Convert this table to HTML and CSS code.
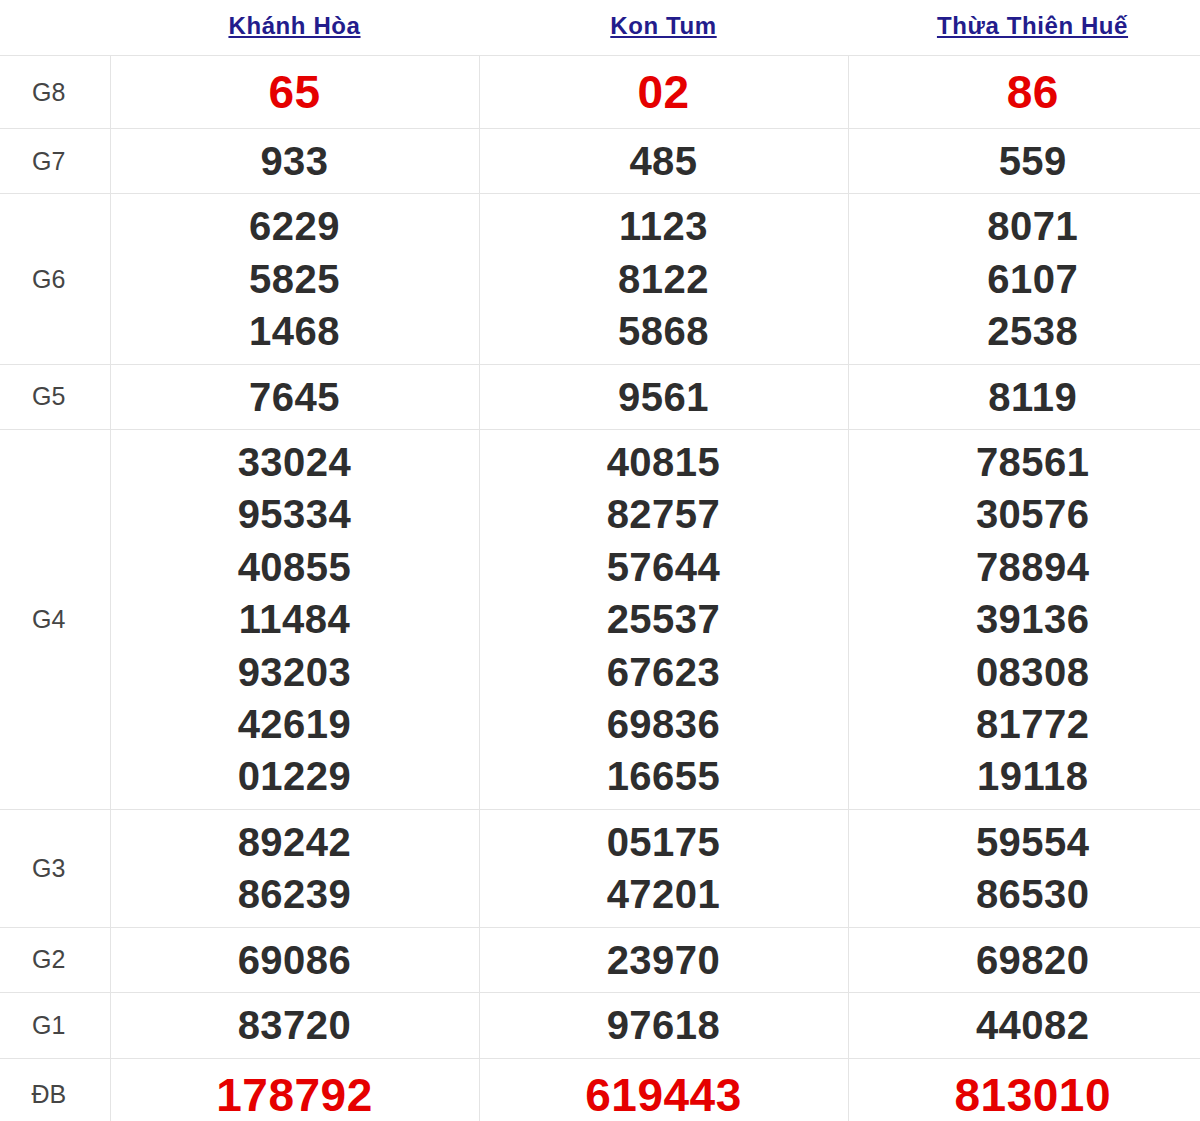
FILE: index.html
```html
<!DOCTYPE html>
<html lang="vi">
<head>
<meta charset="utf-8">
<title>Kết quả xổ số</title>
<link rel="stylesheet" href="styles.css">
</head>
<body>
<table class="kq">
  <colgroup>
    <col class="c-label">
    <col class="c-prov">
    <col class="c-prov">
    <col class="c-prov">
  </colgroup>
  <thead>
    <tr class="head">
      <th></th>
      <th><a href="#">Khánh Hòa</a></th>
      <th><a href="#">Kon Tum</a></th>
      <th><a href="#">Thừa Thiên Huế</a></th>
    </tr>
  </thead>
  <tbody>
    <tr class="big">
      <td class="lbl">G8</td>
      <td class="num red">65</td>
      <td class="num red">02</td>
      <td class="num red">86</td>
    </tr>
    <tr>
      <td class="lbl">G7</td>
      <td class="num">933</td>
      <td class="num">485</td>
      <td class="num">559</td>
    </tr>
    <tr>
      <td class="lbl">G6</td>
      <td class="num"><div>6229</div><div>5825</div><div>1468</div></td>
      <td class="num"><div>1123</div><div>8122</div><div>5868</div></td>
      <td class="num"><div>8071</div><div>6107</div><div>2538</div></td>
    </tr>
    <tr>
      <td class="lbl">G5</td>
      <td class="num">7645</td>
      <td class="num">9561</td>
      <td class="num">8119</td>
    </tr>
    <tr>
      <td class="lbl">G4</td>
      <td class="num"><div>33024</div><div>95334</div><div>40855</div><div>11484</div><div>93203</div><div>42619</div><div>01229</div></td>
      <td class="num"><div>40815</div><div>82757</div><div>57644</div><div>25537</div><div>67623</div><div>69836</div><div>16655</div></td>
      <td class="num"><div>78561</div><div>30576</div><div>78894</div><div>39136</div><div>08308</div><div>81772</div><div>19118</div></td>
    </tr>
    <tr>
      <td class="lbl">G3</td>
      <td class="num"><div>89242</div><div>86239</div></td>
      <td class="num"><div>05175</div><div>47201</div></td>
      <td class="num"><div>59554</div><div>86530</div></td>
    </tr>
    <tr>
      <td class="lbl">G2</td>
      <td class="num">69086</td>
      <td class="num">23970</td>
      <td class="num">69820</td>
    </tr>
    <tr>
      <td class="lbl">G1</td>
      <td class="num">83720</td>
      <td class="num">97618</td>
      <td class="num">44082</td>
    </tr>
    <tr class="big">
      <td class="lbl">ĐB</td>
      <td class="num red">178792</td>
      <td class="num red">619443</td>
      <td class="num red">813010</td>
    </tr>
  </tbody>
</table>
</body>
</html>
```

FILE: styles.css
```css
html, body {
  margin: 0;
  padding: 0;
  background: #fff;
  overflow: hidden;
}

body {
  font-family: "Liberation Sans", Arial, sans-serif;
  width: 1200px;
}

.kq {
  border-collapse: collapse;
  table-layout: fixed;
  width: 1217px;
}

.c-label { width: 110px; }
.c-prov { width: 369px; }

.head th {
  height: 51px;
  padding: 0 0 4px;
  border-bottom: 1px solid #e4e4e4;
  text-align: center;
  vertical-align: middle;
}

.head th a {
  font-size: 24px;
  font-weight: bold;
  letter-spacing: 0.6px;
  color: #231c8c;
  text-decoration: underline;
  text-underline-offset: 2px;
}

tbody td {
  border-bottom: 1px solid #e4e4e4;
  border-left: 1px solid #e4e4e4;
  padding: 6px 0;
  text-align: center;
  vertical-align: middle;
}

tbody td:first-child { border-left: 0; }

.lbl {
  font-size: 25px;
  color: #454545;
  padding-right: 12px;
}

.num {
  font-size: 40px;
  font-weight: bold;
  letter-spacing: 0.5px;
  line-height: 52.4px;
  color: #2e2e2e;
}

.big .num {
  font-size: 46px;
  line-height: 60px;
}

.red { color: #e50000; }
```
